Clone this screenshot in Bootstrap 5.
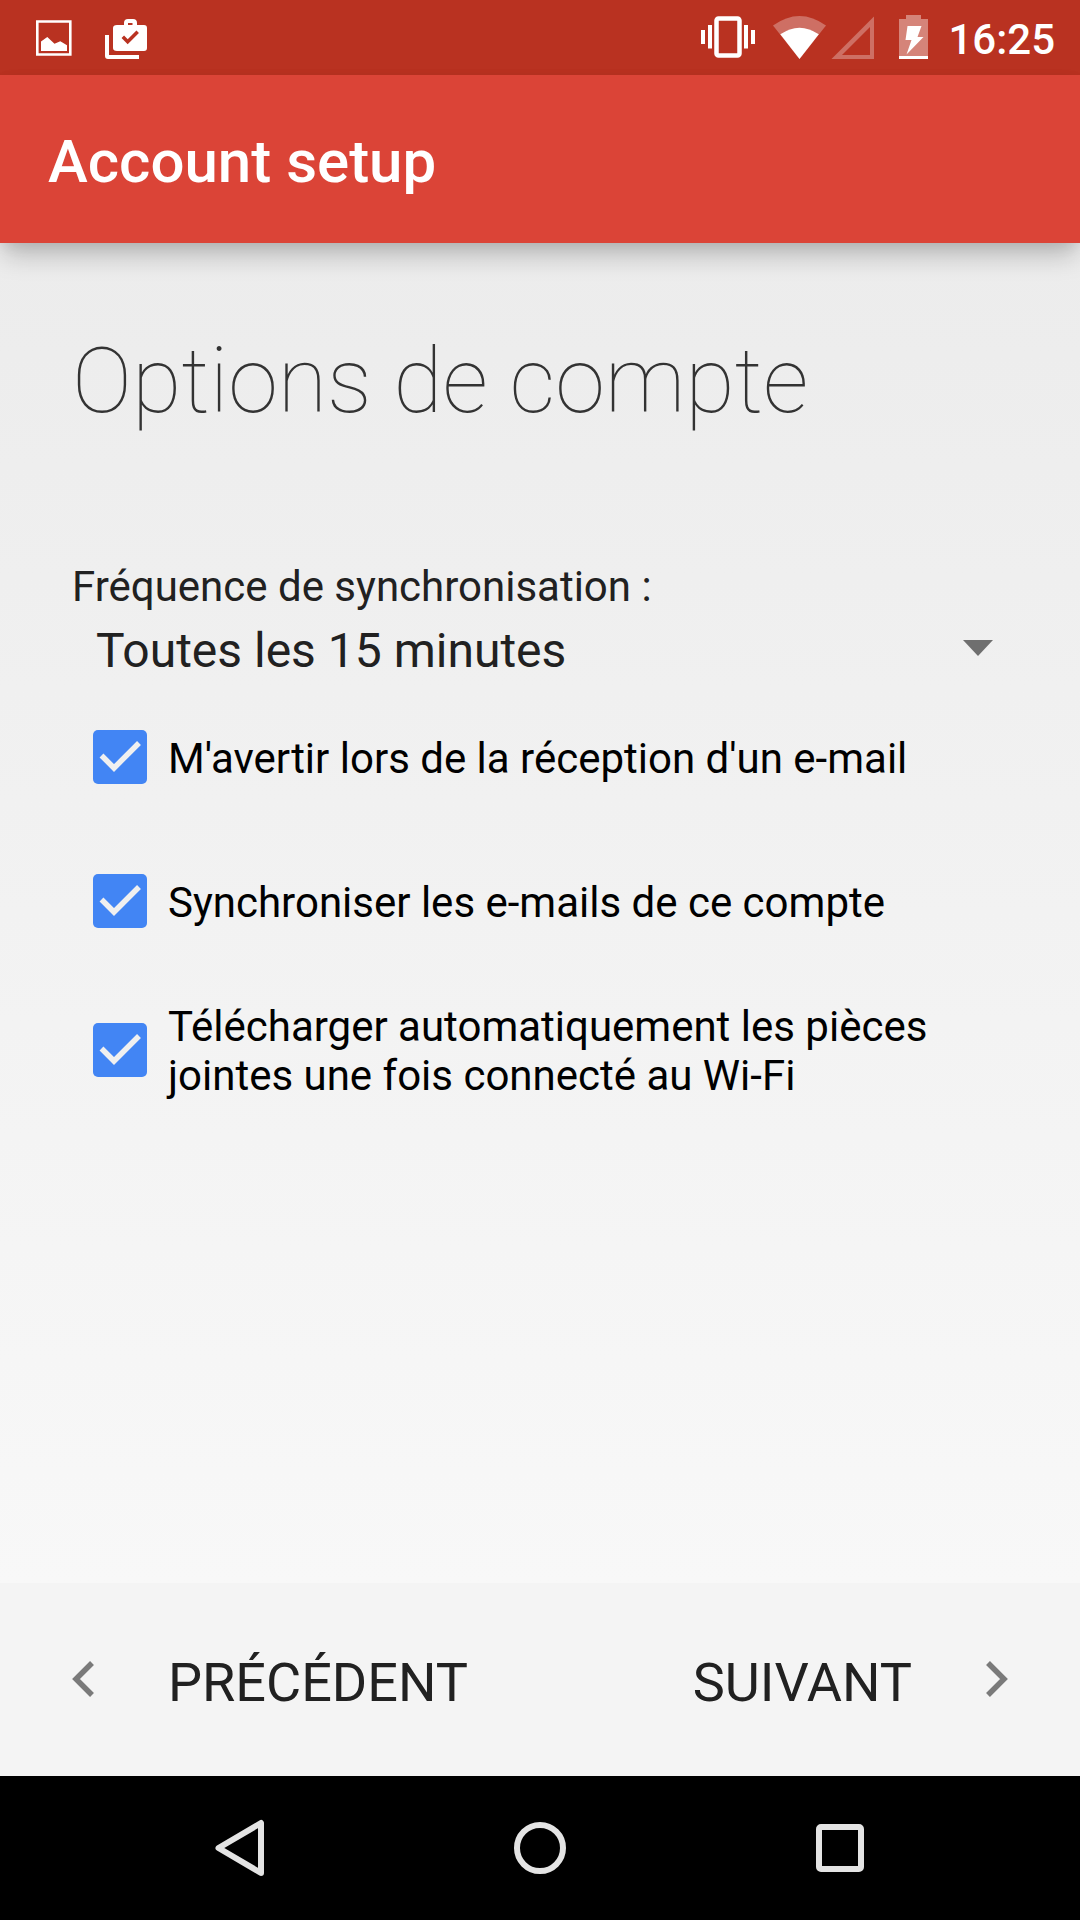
<!DOCTYPE html>
<html lang="fr">
<head>
<meta charset="utf-8">
<meta name="viewport" content="width=device-width, initial-scale=1">
<title>Account setup</title>
<link rel="stylesheet" href="https://cdn.jsdelivr.net/npm/bootstrap@5.3.0/dist/css/bootstrap.min.css">
<style>
  body { font-family: Roboto, "Noto Sans", sans-serif; background: #000; color: #212121; }
  svg { display: block; flex: none; }
  .status-bar { background: #b93221; height: 75px; padding: 0 25px 2px 36px; color: #fff; }
  .status-left { gap: 33px; }
  .clock { font-size: 42px; line-height: 48px; font-weight: 500; padding-top: 6px; margin-left: 20px; }
  .app-bar { background: #db4437; height: 168px; padding: 6px 48px 0; z-index: 1;
    box-shadow: 0 16px 24px -4px rgba(0,0,0,.22), 0 4px 14px -2px rgba(0,0,0,.08); }
  .app-title { font-size: 60px; line-height: 72px; font-weight: 500; color: #fff; }
  .setup { background: linear-gradient(#ececec, #f8f8f8); padding: 86px 72px 0; }
  .setup-title { font-size: 90px; line-height: 106px; font-weight: 100; color: #333; margin-bottom: 127px; }
  .sync-label { font-size: 42px; line-height: 49px; margin-bottom: 12px; }
  .sync-select { font-size: 48px; line-height: 56px; height: 56px; padding: 0 60px 0 24px; border: 0; border-radius: 0;
    color: #212121; margin-bottom: 6px; background-color: transparent;
    background-image: url("data:image/svg+xml,%3Csvg xmlns='http://www.w3.org/2000/svg' viewBox='0 0 30 24'%3E%3Cpath fill='%236f6f6f' d='M0 1h30L15 17z'/%3E%3C/svg%3E");
    background-size: 30px 24px; background-position: right 15px center; }
  .option { min-height: 144px; padding: 26px 0 26px 21px; gap: 21px; }
  .option .form-check-input { width: 54px; height: 54px; margin: 0; float: none; flex: none; border: 0; border-radius: 5px; background-color: #fff; }
  .option .form-check-input:checked { background-color: #4285f4; background-size: 54px 54px;
    background-image: url("data:image/svg+xml,%3Csvg xmlns='http://www.w3.org/2000/svg' viewBox='0 0 54 54'%3E%3Cpath fill='none' stroke='%23f0f0f0' stroke-width='5.5' d='M8.500 25.500 21 38 46 13'/%3E%3C/svg%3E"); }
  .option .form-check-label { font-size: 42px; line-height: 49px; color: #000; padding-top: 3px; }
  .wizard-nav { background: #f4f4f4; height: 193px; padding: 0 72px 2px; }
  .wizard-nav .btn { font-size: 54px; line-height: 64px; padding: 0; border: 0; border-radius: 0; color: #212121; gap: 74px; }
  .wizard-nav span { padding-top: 8px; }
  .system-nav { background: #000; height: 144px; }
  .system-nav .btn { width: 300px; height: 144px; padding: 0; border: 0; border-radius: 0; flex: 0 1 300px; }
</style>
<script src="https://cdn.jsdelivr.net/npm/bootstrap@5.3.0/dist/js/bootstrap.bundle.min.js"></script>
</head>
<body class="d-flex flex-column min-vh-100">

<div class="status-bar d-flex align-items-center justify-content-between">
  <div class="status-left d-flex align-items-center">
    <svg width="36" height="44" viewBox="36 15 36 44" aria-hidden="true">
      <path fill="none" stroke="#fff" stroke-width="2.600" d="M37.300 21.500h33v33h-33z"/>
      <path fill="#fff" d="M41 51V41.500L47.300 37 54.500 43.700 60.300 41.200 67 45.200V51z"/>
    </svg>
    <svg width="43" height="44" viewBox="105 15 43 44" aria-hidden="true">
      <path fill="#fff" d="M105 35h4v20h30v4h-31q-3 0-3-3z"/>
      <path fill="#fff" fill-rule="evenodd" d="M117 25h7v-2q0-4 4-4h5q4 0 4 4v2h7q3 0 3 3v20q0 3-3 3h-27q-4 0-4-3V28q0-3 4-3zM128 25h4.500v-2H128z"/>
      <path fill="none" stroke="#b93221" stroke-width="3.500" d="M122.800 36.800 127.700 41.800 137.700 31.800"/>
    </svg>
  </div>
  <div class="d-flex align-items-center">
    <svg width="227" height="44" viewBox="701 15 227 44" aria-hidden="true">
      <path fill="#fff" d="M701 30h4v14h-4zM708 25h4v23.500h-4zM744 25h4v23.500h-4zM751 30h4v14h-4z"/>
      <rect x="716.500" y="18.500" width="23" height="37" rx="2" fill="none" stroke="#fff" stroke-width="4.500"/>
      <path fill="#fff" fill-opacity=".3" d="M773 25.500Q799.500 6.500 826 25.500L799.500 59z"/>
      <path fill="#fff" d="M780.300 34.300Q799.500 21 818.800 34.300L799.500 59z"/>
      <path fill="#fff" fill-opacity=".3" fill-rule="evenodd" d="M874 16.500V59H831.500zM870 27 842 55H870z"/>
      <path fill="#fff" fill-opacity=".4" d="M899 19h7v-4h15v4h7v37h-29z"/>
      <path fill="#fff" d="M899 56h29v3h-29zM907.500 26H921.500L917.500 37H923.500L906.500 54.500 911.500 40H905.500z"/>
    </svg>
    <time class="clock">16:25</time>
  </div>
</div>

<header class="app-bar d-flex align-items-center position-relative">
  <div class="app-title">Account setup</div>
</header>

<main class="setup flex-grow-1">
  <h1 class="setup-title mt-0">Options de compte</h1>
  <form>
    <label class="sync-label d-block" for="sync">Fréquence de synchronisation :</label>
    <select class="sync-select form-select" id="sync">
      <option selected>Toutes les 15 minutes</option>
    </select>
    <div class="option d-flex align-items-center">
      <input class="form-check-input" type="checkbox" id="notify" checked>
      <label class="form-check-label" for="notify">M'avertir lors de la réception d'un e-mail</label>
    </div>
    <div class="option d-flex align-items-center">
      <input class="form-check-input" type="checkbox" id="mails" checked>
      <label class="form-check-label" for="mails">Synchroniser les e-mails de ce compte</label>
    </div>
    <div class="option d-flex align-items-center">
      <input class="form-check-input" type="checkbox" id="files" checked>
      <label class="form-check-label" for="files">Télécharger automatiquement les pièces jointes une fois connecté au Wi-Fi</label>
    </div>
  </form>
</main>

<div class="wizard-nav d-flex align-items-center justify-content-between">
  <button class="btn d-flex align-items-center" type="button">
    <svg width="22" height="38" viewBox="0 0 22 38" aria-hidden="true"><path fill="none" stroke="#7a7a7a" stroke-width="5.500" d="M20 3 4 19 20 35"/></svg>
    <span>PRÉCÉDENT</span>
  </button>
  <button class="btn d-flex align-items-center" type="button">
    <span>SUIVANT</span>
    <svg width="22" height="38" viewBox="0 0 22 38" aria-hidden="true"><path fill="none" stroke="#7a7a7a" stroke-width="5.500" d="M2 3 18 19 2 35"/></svg>
  </button>
</div>

<nav class="system-nav d-flex justify-content-center" aria-label="Navigation">
  <button class="btn d-flex align-items-center justify-content-center" type="button" aria-label="Retour">
    <svg width="50" height="58" viewBox="0 0 50 58"><path fill="none" stroke="#e4e4e4" stroke-width="6" stroke-linejoin="round" d="M46 4V54L3.500 29z"/></svg>
  </button>
  <button class="btn d-flex align-items-center justify-content-center" type="button" aria-label="Accueil">
    <svg width="54" height="54" viewBox="0 0 54 54"><circle cx="27" cy="27" r="23" fill="none" stroke="#e4e4e4" stroke-width="6"/></svg>
  </button>
  <button class="btn d-flex align-items-center justify-content-center" type="button" aria-label="Applications récentes">
    <svg width="48" height="48" viewBox="0 0 48 48"><rect x="3" y="3" width="42" height="42" rx="2" fill="none" stroke="#e4e4e4" stroke-width="6"/></svg>
  </button>
</nav>
</body>
</html>
